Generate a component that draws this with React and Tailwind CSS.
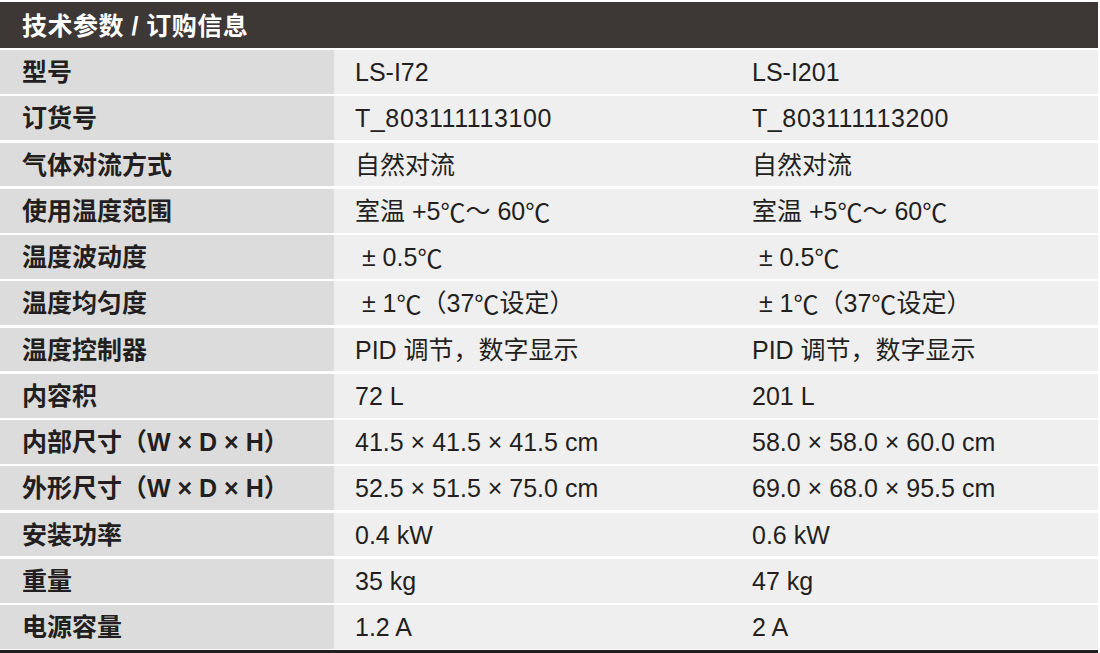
import React from "react";

const rows = [
  { label: "型号", a: "LS-I72", b: "LS-I201" },
  { label: "订货号", a: "T_803111113100", b: "T_803111113200", wide: true },
  { label: "气体对流方式", a: "自然对流", b: "自然对流" },
  { label: "使用温度范围", a: "室温 +5℃～ 60℃", b: "室温 +5℃～ 60℃" },
  { label: "温度波动度", a: " ± 0.5℃", b: " ± 0.5℃" },
  { label: "温度均匀度", a: " ± 1℃（37℃设定）", b: " ± 1℃（37℃设定）" },
  { label: "温度控制器", a: "PID 调节，数字显示", b: "PID 调节，数字显示" },
  { label: "内容积", a: "72 L", b: "201 L" },
  { label: "内部尺寸（W × D × H）", a: "41.5 × 41.5 × 41.5 cm", b: "58.0 × 58.0 × 60.0 cm" },
  { label: "外形尺寸（W × D × H）", a: "52.5 × 51.5 × 75.0 cm", b: "69.0 × 68.0 × 95.5 cm" },
  { label: "安装功率", a: "0.4 kW", b: "0.6 kW" },
  { label: "重量", a: "35 kg", b: "47 kg" },
  { label: "电源容量", a: "1.2 A", b: "2 A" },
];

const font = "font-['Liberation_Sans','Noto_Sans_CJK_SC',sans-serif]";

// ℃ as a full-width CJK glyph, like the printed sheet
const Val = ({ text }) =>
  text.split("℃").map((part, i) => (
    <React.Fragment key={i}>
      {i > 0 && <span className="font-['Noto_Sans_CJK_SC',sans-serif]">℃</span>}
      {part}
    </React.Fragment>
  ));

export default function App() {
  return (
    <div className={`bg-white w-[1100px] h-[653px] pt-[2px] ${font}`}>
      <div className="w-[1098px]">
        <div className="h-[46px] bg-[#3d3736] flex items-center px-[22px] pt-[4px] text-white font-bold text-[25px] tracking-[0.5px]">
          技术参数 / 订购信息
        </div>
        <div className="mt-[2px] flex flex-col gap-[2.5px]">
          {rows.map((r) => (
            <div key={r.label} className="grid grid-cols-[334px_398px_1fr] h-[43.75px] text-[25px] text-[#231f20]">
              <div className="bg-[#dcdcdc] flex items-center pl-[22px] pt-[2px] font-bold whitespace-pre">{r.label}</div>
              <div className={`bg-[#efefef] flex items-center pl-[21px] pt-[2px] whitespace-pre ${r.wide ? "tracking-[0.6px]" : ""}`}>
                <Val text={r.a} />
              </div>
              <div className={`bg-[#efefef] flex items-center pl-[20px] pt-[2px] whitespace-pre ${r.wide ? "tracking-[0.6px]" : ""}`}>
                <Val text={r.b} />
              </div>
            </div>
          ))}
        </div>
        <div className="mt-px h-[3px] bg-[#231f20]" />
      </div>
    </div>
  );
}
